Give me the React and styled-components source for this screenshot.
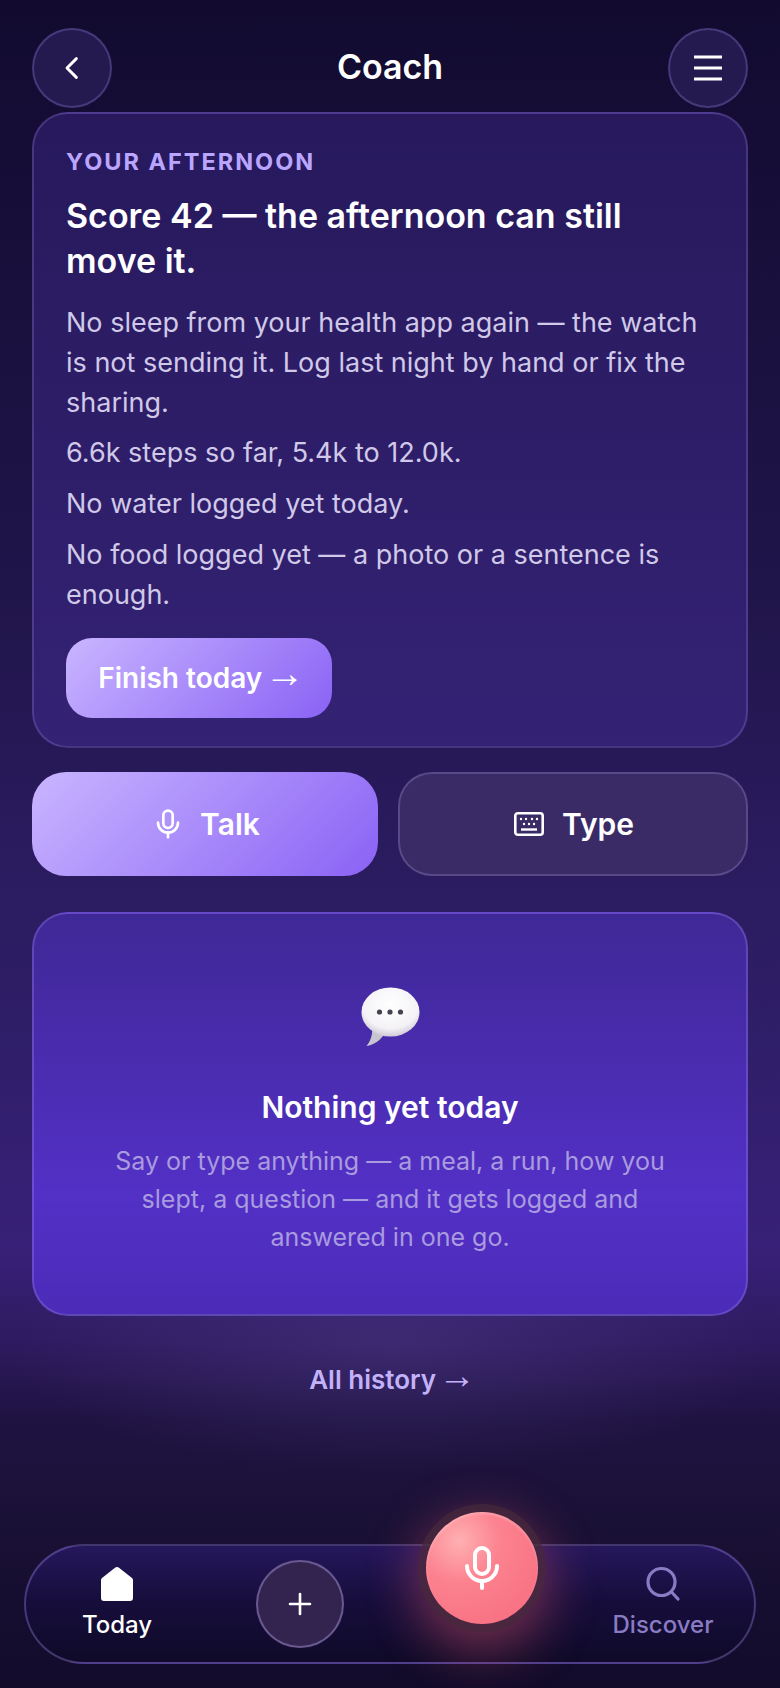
import React from "react";
import styled, { createGlobalStyle } from "styled-components";

const Global = createGlobalStyle`
  html, body { margin: 0; padding: 0; background: #0e0a26; }
  * { box-sizing: border-box; }
`;

const Page = styled.div`
  position: relative;
  width: 780px;
  height: 1688px;
  overflow: hidden;
  display: flex;
  flex-direction: column;
  padding: 28px 32px 0;
  font-family: Inter, "Liberation Sans", sans-serif;
  color: #fff;
  background:
    radial-gradient(ellipse 380px 130px at 50% 1345px, rgba(100, 80, 160, 0.28), rgba(100, 80, 160, 0) 100%),
    linear-gradient(180deg, #120b2f 0%, #150d36 8%, #20154a 35%, #2a1b5e 50%, #2f1e69 62%, #382078 74%, #2f1b62 79%, #1f1342 84%, #1a1136 90%, #120b2a 100%);
`;

const Header = styled.header`
  display: flex;
  align-items: center;
  justify-content: space-between;
  height: 80px;
  flex: none;
`;

const RoundButton = styled.button`
  width: 80px;
  height: 80px;
  border-radius: 50%;
  border: 2px solid rgba(150, 130, 220, 0.3);
  background: #251a50;
  color: #fff;
  padding: 0;
  display: flex;
  align-items: center;
  justify-content: center;
`;

const Title = styled.h1`
  margin: 0 0 3px;
  font-size: 34px;
  line-height: 44px;
  font-weight: 600;
`;

const Card = styled.section`
  margin-top: 4px;
  border-radius: 36px;
  border: 2px solid rgba(150, 130, 220, 0.28);
  background: linear-gradient(180deg, #27195c 0%, #342274 100%);
  padding: 33px 32px 28px;
  flex: none;
`;

const Eyebrow = styled.div`
  font-size: 23.500px;
  line-height: 30px;
  font-weight: 700;
  letter-spacing: 2px;
  color: #bba6ff;
`;

const Headline = styled.h2`
  margin: 16px 0 0;
  font-size: 34px;
  line-height: 45px;
  font-weight: 600;
`;

const Para = styled.p`
  margin: ${(p) => p.$top}px 0 0;
  font-size: 27px;
  line-height: 40px;
  color: #d0c9e8;
`;

const LongArrow = styled.span`
  font-family: "Liberation Sans", sans-serif;
  font-weight: 400;
  font-size: 1.430em;
  line-height: 0;
  vertical-align: 0.020em;
  margin: 0 -0.120em;
`;

const GradientButton = styled.button`
  border: 0;
  color: #fff;
  font-family: inherit;
  font-weight: 600;
  background: linear-gradient(135deg, #c9b5ff 0%, #8a62f5 100%);
`;

const Finish = styled(GradientButton)`
  display: block;
  margin-top: 23px;
  width: 266px;
  height: 80px;
  border-radius: 26px;
  font-size: 28px;
  padding: 0;
`;

const ActionRow = styled.div`
  display: grid;
  grid-template-columns: 346px 350px;
  gap: 20px;
  margin-top: 24px;
  flex: none;
`;

const Talk = styled(GradientButton)`
  height: 104px;
  border-radius: 34px;
  font-size: 30px;
  display: flex;
  align-items: center;
  justify-content: center;
  gap: 16px;
  padding: 0 0 0 2px;
`;

const TypeButton = styled.button`
  height: 104px;
  border-radius: 34px;
  border: 2px solid rgba(160, 145, 220, 0.3);
  background: #3a2b66;
  color: #fff;
  font-family: inherit;
  font-size: 30px;
  font-weight: 600;
  display: flex;
  align-items: center;
  justify-content: center;
  gap: 18px;
  padding: 0 0 0 2px;
`;

const EmptyCard = styled.section`
  margin-top: 36px;
  height: 404px;
  border-radius: 36px;
  border: 2px solid rgba(150, 130, 230, 0.35);
  background: linear-gradient(180deg, #3f2896 0%, #5330c6 70%, #4c2bb8 100%);
  display: flex;
  flex-direction: column;
  align-items: center;
  padding: 71px 60px 0;
  flex: none;
`;

const EmptyTitle = styled.h3`
  margin: 40px 0 0;
  font-size: 30px;
  line-height: 40px;
  font-weight: 600;
`;

const EmptyText = styled.p`
  margin: 15px 0 0;
  font-size: 25px;
  line-height: 38px;
  text-align: center;
  color: #a99bdf;
`;

const HistoryLink = styled.div`
  margin-top: 44px;
  text-align: center;
  font-size: 26px;
  line-height: 40px;
  font-weight: 600;
  color: #c3b2fa;
`;

const Nav = styled.nav`
  position: absolute;
  left: 24px;
  bottom: 24px;
  width: 732px;
  height: 120px;
  border-radius: 60px;
  border: 2px solid rgba(150, 130, 220, 0.38);
  background: linear-gradient(180deg, #25175c 0%, #170e3d 45%, #0f0a28 100%);
  display: grid;
  grid-template-columns: 182px 184px 1fr 182px;
  align-items: center;
`;

const NavItem = styled.div`
  display: flex;
  flex-direction: column;
  align-items: center;
  gap: 6px;
  font-size: 24px;
  line-height: 34px;
  color: ${(p) => (p.$active ? "#fff" : "#8a7cc4")};
  font-weight: 500;
`;

const PlusCell = styled.div`
  display: flex;
  justify-content: center;
`;

const Plus = styled.button`
  width: 88px;
  height: 88px;
  border-radius: 50%;
  border: 2px solid rgba(170, 155, 225, 0.45);
  background: #33244f;
  color: #fff;
  padding: 0;
  display: flex;
  align-items: center;
  justify-content: center;
`;

const Fab = styled.button`
  position: absolute;
  left: 426px;
  top: 1512px;
  width: 112px;
  height: 112px;
  border-radius: 50%;
  border: 0;
  padding: 0;
  color: #fff;
  display: flex;
  align-items: center;
  justify-content: center;
  background: radial-gradient(circle at 30% 26%, #ffb0b2 0%, #fc8290 36%, #f66a7d 100%);
  box-shadow: inset 0 2px 3px rgba(255, 255, 255, 0.25), 0 0 0 8px rgba(70, 40, 60, 0.75), 0 16px 50px 12px rgba(240, 90, 110, 0.42);
`;

const Mic = ({ size, sw = 2 }) => (
  <svg width={size} height={size} viewBox="0 0 24 24" fill="none" stroke="currentColor" strokeWidth={sw} strokeLinecap="round" strokeLinejoin="round">
    <rect x="8.500" y="2" width="7" height="13" rx="3.500" />
    <path d="M4.500 11a7.500 7.500 0 0 0 15 0" />
    <path d="M12 18.500V22" />
  </svg>
);

const Bubble = () => (
  <svg width="62" height="62" viewBox="0 0 62 62">
    <defs>
      <radialGradient id="bub" cx="0.5" cy="0.35" r="0.75">
        <stop offset="0" stopColor="#ffffff" />
        <stop offset="0.65" stopColor="#f4f2f6" />
        <stop offset="1" stopColor="#b9b3c6" />
      </radialGradient>
    </defs>
    <path fill="#c9c5d0" d="M13 42C14 50 11 57 7.500 61C15 60 22 55 26 48Z" />
    <ellipse cx="31.500" cy="27" rx="29" ry="24.500" fill="url(#bub)" />
    <circle cx="20.500" cy="27" r="2.600" fill="#45424f" />
    <circle cx="31" cy="27" r="2.600" fill="#45424f" />
    <circle cx="41.500" cy="27" r="2.600" fill="#45424f" />
  </svg>
);

const Keyboard = () => (
  <svg width="30" height="30" viewBox="0 0 30 30" fill="none" stroke="currentColor">
    <rect x="1.300" y="4.300" width="27.400" height="21.400" rx="2.500" strokeWidth="2.600" />
    <path d="M7 10v.01M12 10v.01M18 10v.01M23 10v.01M10 15v.01M15 15v.01M20 15v.01" strokeWidth="2.400" strokeLinecap="round" />
    <path d="M7 20.500h16" strokeWidth="2.400" />
  </svg>
);

export default function App() {
  return (
    <Page>
      <Global />
      <Header>
        <RoundButton aria-label="Back">
          <svg width="30" height="30" viewBox="0 0 24 24" fill="none" stroke="currentColor" strokeWidth="2.300" strokeLinecap="round" strokeLinejoin="round"><path d="M15.500 4.500 8 12l7.500 7.500" /></svg>
        </RoundButton>
        <Title>Coach</Title>
        <RoundButton aria-label="Menu">
          <svg width="28" height="26" viewBox="0 0 28 26" fill="none" stroke="currentColor" strokeWidth="3"><path d="M0 2h28M0 13h28M0 24h28" /></svg>
        </RoundButton>
      </Header>
      <Card>
        <Eyebrow>YOUR AFTERNOON</Eyebrow>
        <Headline>Score 42 — the afternoon can still move it.</Headline>
        <Para $top={20}>No sleep from your health app again — the watch is not sending it. Log last night by hand or fix the sharing.</Para>
        <Para $top={10}>6.6k steps so far, 5.4k to 12.0k.</Para>
        <Para $top={11}>No water logged yet today.</Para>
        <Para $top={11}>No food logged yet — a photo or a sentence is enough.</Para>
        <Finish>Finish today <LongArrow>→</LongArrow></Finish>
      </Card>
      <ActionRow>
        <Talk><Mic size={32} /><span>Talk</span></Talk>
        <TypeButton>
          <Keyboard />
          <span>Type</span>
        </TypeButton>
      </ActionRow>
      <EmptyCard>
        <Bubble />
        <EmptyTitle>Nothing yet today</EmptyTitle>
        <EmptyText>Say or type anything — a meal, a run, how you slept, a question — and it gets logged and answered in one go.</EmptyText>
      </EmptyCard>
      <HistoryLink>All history <LongArrow>→</LongArrow></HistoryLink>
      <Nav>
        <NavItem $active>
          <svg width="36" height="36" viewBox="0 0 36 36" fill="#fff"><path d="M18 1a3 3 0 0 1 2 .8L33 12a3 3 0 0 1 1 2.400V32a3 3 0 0 1-3 3H5a3 3 0 0 1-3-3V14.400a3 3 0 0 1 1-2.400L16 1.800a3 3 0 0 1 2-.8z" /></svg>
          <span>Today</span>
        </NavItem>
        <PlusCell>
          <Plus aria-label="Add">
            <svg width="24" height="24" viewBox="0 0 24 24" fill="none" stroke="currentColor" strokeWidth="2.600" strokeLinecap="round"><path d="M12 2v20M2 12h20" /></svg>
          </Plus>
        </PlusCell>
        <span />
        <NavItem>
          <svg width="36" height="36" viewBox="0 0 36 36" fill="none" stroke="currentColor" strokeWidth="3.200" strokeLinecap="round"><circle cx="16.500" cy="16" r="13.500" /><path d="M26.500 26 33 33" /></svg>
          <span>Discover</span>
        </NavItem>
      </Nav>
      <Fab aria-label="Talk to coach"><Mic size={48} sw={2} /></Fab>
    </Page>
  );
}
